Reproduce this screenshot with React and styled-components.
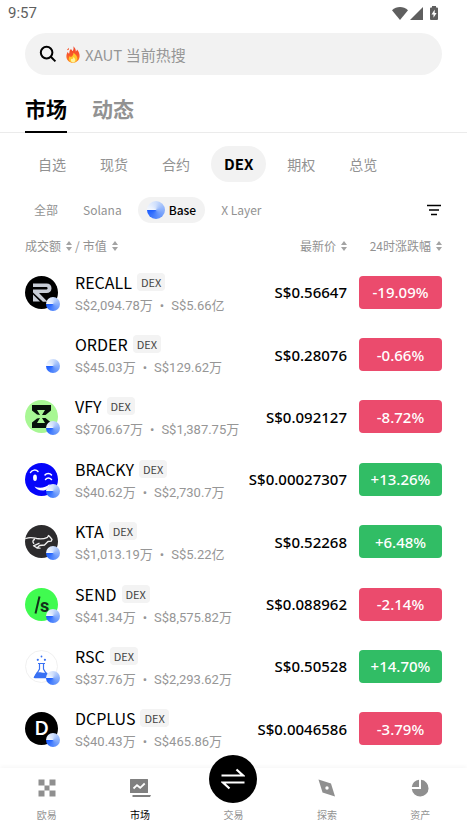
import React from "react";
import styled, { createGlobalStyle, css } from "styled-components";

const GlobalStyle = createGlobalStyle`
  *, *::before, *::after { box-sizing: border-box; }
  html, body { margin: 0; background: #fff; }
  body, button, input {
    font-family: "Noto Sans CJK SC", Roboto, sans-serif;
  }
  button { margin: 0; padding: 0; border: 0; background: none; color: inherit; cursor: pointer; }
  svg { display: block; flex: none; }
`;

const Screen = styled.div`
  display: flex;
  flex-direction: column;
  min-height: 100vh;
  color: #000;
`;

const StatusBar = styled.div`
  display: flex;
  align-items: center;
  justify-content: space-between;
  height: 26px;
  padding: 0 24px 0 8px;
  font-family: Roboto, sans-serif;
  font-size: 15px;
  color: #5f5f5f;
`;

const StatusIcons = styled.div`
  display: flex;
  align-items: center;
  gap: 2px;
`;

const SearchBar = styled.label`
  display: flex;
  align-items: center;
  height: 42px;
  margin: 7px 25px 0;
  padding: 0 14px;
  border-radius: 21px;
  background: #f2f2f2;
`;

const SearchFire = styled.span`
  margin-left: 9px;
`;

const SearchInput = styled.input`
  flex: 1;
  min-width: 0;
  margin-left: 5px;
  padding: 0;
  border: 0;
  outline: 0;
  background: transparent;
  font-size: 15px;
  color: #000;
  &::placeholder { color: #969696; opacity: 1; }
`;

const MainTabs = styled.nav`
  display: flex;
  gap: 25px;
  height: 58px;
  padding: 0 25px;
  border-bottom: 1px solid #ebebeb;
`;

const MainTab = styled.button`
  margin-bottom: -1px;
  padding-bottom: 1px;
  padding-top: 10px;
  border-bottom: 2px solid ${(p) => (p.$active ? "#000" : "transparent")};
  font-size: 21px;
  line-height: 24px;
  font-weight: 700;
  color: ${(p) => (p.$active ? "#000" : "#929292")};
`;

const SubTabs = styled.nav`
  display: flex;
  gap: 8px;
  padding: 13px 25px 0;
`;

const SubTab = styled.button`
  height: 36px;
  padding: 0 13px;
  border-radius: 18px;
  font-size: 14px;
  line-height: 20px;
  color: #929292;
  ${(p) =>
    p.$active &&
    css`
      background: #f2f2f2;
      color: #000;
      font-size: 15px;
      font-weight: 700;
    `}
`;

const ChainBar = styled.div`
  display: flex;
  align-items: center;
  gap: 7px;
  padding: 15px 25px 0;
`;

const ChainChip = styled.button`
  display: flex;
  align-items: center;
  gap: 4px;
  height: 26px;
  padding: 0 9px;
  border-radius: 13px;
  font-size: 12px;
  line-height: 16px;
  color: #929292;
  ${(p) =>
    p.$active &&
    css`
      background: #f2f2f2;
      color: #000;
      font-weight: 500;
    `}
`;

const FilterButton = styled.button`
  margin-left: auto;
`;

const BaseMark = styled.span`
  display: block;
  flex: none;
  width: ${(p) => p.$size}px;
  height: ${(p) => p.$size}px;
  border-radius: 50%;
  background: conic-gradient(from 270deg, #f4f8ff, #cfdffc 25%, #96b8fb 45%, #5388fc 75%, #1a5cff);
`;

const MarketTable = styled.table`
  display: flex;
  flex: 1;
  flex-direction: column;
  padding: 0 25px 8px;
`;

const TableHead = styled.thead`
  display: block;
`;

const TableBody = styled.tbody`
  display: flex;
  flex: 1;
  flex-direction: column;
`;

const rowGrid = css`
  display: grid;
  grid-template-columns: minmax(0, 1fr) auto 83px;
  column-gap: 12px;
  align-items: center;
`;

const HeadRow = styled.tr`
  ${rowGrid}
  height: 38px;
  padding-top: 8px;
`;

const HeadCell = styled.th`
  display: flex;
  align-items: center;
  justify-content: ${(p) => (p.$end ? "flex-end" : "flex-start")};
  gap: 3px;
  padding: 0;
  font-size: 12px;
  line-height: 16px;
  font-weight: 400;
  color: #929292;
`;

const SortButton = styled.button`
  display: flex;
  align-items: center;
  gap: 5px;
  font-size: 12px;
  line-height: 16px;
  white-space: nowrap;
`;

const Row = styled.tr`
  ${rowGrid}
  flex: 1;
  min-height: 60px;
`;

const AssetCell = styled.td`
  display: flex;
  align-items: center;
  gap: 17px;
  padding: 0;
`;

const Avatar = styled.div`
  position: relative;
  flex: none;
  width: 33px;
  height: 33px;
`;

const ChainBadge = styled.div`
  position: absolute;
  right: -2px;
  bottom: -2px;
`;

const AssetText = styled.div`
  display: flex;
  flex-direction: column;
  gap: 6px;
  padding-top: 3px;
`;

const AssetName = styled.div`
  display: flex;
  align-items: center;
  gap: 5px;
  font-size: 16px;
  line-height: 18px;
`;

const Tag = styled.span`
  padding: 0 4px;
  border-radius: 4px;
  background: #f3f3f3;
  font-size: 11px;
  line-height: 18px;
  color: #444;
`;

const AssetMeta = styled.div`
  display: flex;
  gap: 7px;
  font-family: Roboto, "Noto Sans CJK SC", sans-serif;
  font-size: 13px;
  line-height: 18px;
  white-space: nowrap;
  color: #969696;
`;

const PriceCell = styled.td`
  padding: 0;
  font-family: "Noto Sans", sans-serif;
  font-size: 15px;
  font-weight: 500;
  line-height: 20px;
  text-align: right;
`;

const ChangeCell = styled.td`
  padding: 0;
`;

const ChangeButton = styled.button`
  width: 100%;
  height: 33px;
  border-radius: 4px;
  background: ${(p) => (p.$up ? "#31bd65" : "#eb4b6d")};
  color: #fff;
  font-family: "Noto Sans", sans-serif;
  font-size: 15px;
  font-weight: 500;
  line-height: 20px;
`;

const BottomNav = styled.nav`
  position: sticky;
  bottom: 0;
  display: grid;
  grid-template-columns: repeat(5, 1fr);
  height: 62px;
  background: #fff;
  box-shadow: 0 -2px 4px rgba(0, 0, 0, 0.03);
`;

const NavItem = styled.a`
  display: flex;
  flex-direction: column;
  align-items: center;
  justify-content: flex-end;
  gap: 8px;
  padding-bottom: 7px;
  font-size: 10px;
  line-height: 16px;
  text-decoration: none;
  color: ${(p) => (p.$active ? "#000" : "#929292")};
`;

const NavIcon = styled.span`
  display: flex;
  align-items: center;
  justify-content: center;
  height: 22px;
`;

const TradeCircle = styled.span`
  display: flex;
  align-items: center;
  justify-content: center;
  width: 48px;
  height: 48px;
  margin: -20px 0 -4px;
  border-radius: 50%;
  background: #000;
`;

const SortIcon = () => (
  <svg width="6" height="10" viewBox="0 0 6 10" fill="#a3a3a3" aria-hidden="true">
    <path d="M3 0 6 4H0zM3 10 0 6h6z" />
  </svg>
);

const SearchIcon = () => (
  <svg width="18" height="18" viewBox="0 0 18 18" fill="none" stroke="#000" strokeWidth="2" aria-hidden="true">
    <circle cx="7.6" cy="7.6" r="5.8" />
    <path d="m11.8 11.8 4.6 4.6" />
  </svg>
);

const FireIcon = () => (
  <svg width="14" height="17" viewBox="0 0 14 17" aria-hidden="true">
    <defs>
      <linearGradient id="fire" x1="0" y1="0" x2="0" y2="1">
        <stop offset="0" stopColor="#f0462c" />
        <stop offset="0.5" stopColor="#f9552a" />
        <stop offset="1" stopColor="#ff8b1f" />
      </linearGradient>
    </defs>
    <path
      d="M7.2.3c2 1.500 2.700 3.100 2.600 5.200.7-.3 1.100-1 1.200-1.900 1.800 2 2.700 4.200 2.600 6.700-.1 3.700-2.700 6.400-6.500 6.400S.400 14.100.400 10.400c0-1.900.700-3.400 1.400-4.600.2 1 .6 1.600 1.200 2C3.700 6.600 3.200 5.500 4 4c.5-.9 1.300-1.100 1.700-.2.4.9.600 1.200 1 1.300C7.600 3.700 7.900 2 7.200.3z"
      fill="url(#fire)"
    />
    <path d="M1 3.400c.8-.2 1.400-.8 1.500-1.600.9.900.4 2-.3 2.300-.5.200-1-.1-1.200-.7z" fill="#f5572f" />
    <path d="M7.500 6.800c2.700 2 4 4 3.800 5.900-.2 2.300-1.900 3.800-4.200 3.800s-4.200-1.400-4.300-3.700c0-1.200.4-2.100 1-2.900.4.800.8 1.100 1.400 1.100C6.700 10.200 7.300 8.900 7.500 6.800z" fill="#ffc52c" />
    <path d="M7.300 11c1.500 1.100 2.100 2.200 2 3.300-.1 1.300-1 2.100-2.200 2.100s-2.200-.8-2.200-2.100c0-.6.200-1.100.5-1.500.9.600 1.900-.100 1.900-1.800z" fill="#fff19a" />
  </svg>
);

const WifiIcon = () => (
  <svg width="16" height="13" viewBox="0 0 16 13" fill="#5f5f5f" aria-hidden="true">
    <path d="M0 3.300C4.600-1.100 11.400-1.100 16 3.300L8 13z" />
  </svg>
);

const SignalIcon = () => (
  <svg width="13" height="13" viewBox="0 0 13 13" fill="#5f5f5f" aria-hidden="true">
    <path d="M13 0v13H0z" />
  </svg>
);

const BatteryIcon = () => (
  <svg width="18" height="14" viewBox="0 0 18 14" aria-hidden="true">
    <path d="M7 0h4v1.500h1q1 0 1 1V13q0 1-1 1H6q-1 0-1-1V2.500q0-1 1-1h1z" fill="#5f5f5f" />
    <path d="m9.700 3.500-3.200 5h2v3.300l3.100-4.900H9.700z" fill="#fff" />
  </svg>
);

const FilterIcon = () => (
  <svg width="16" height="12" viewBox="0 0 16 12" stroke="#000" strokeWidth="1.500" aria-hidden="true">
    <path d="M1 1.500h14M3 6h10M5 10.500h6" />
  </svg>
);

const LogoRecall = () => (
  <svg width="33" height="33" viewBox="0 0 33 33" aria-hidden="true">
    <circle cx="16.500" cy="16.500" r="16.500" />
    <path d="M8 7.500h13.500c3.200 0 5 1.700 5 4.700s-1.900 4.900-5 4.900H14l8.500 8.700h-4.600L8 16.500v-3h13c1 0 1.600-.5 1.600-1.300S22 11 21 11H8z" fill="#c7ccd5" />
    <path d="m8 18.500 7 7H8z" fill="#c7ccd5" />
  </svg>
);

const LogoVfy = () => (
  <svg width="33" height="33" viewBox="0 0 33 33" aria-hidden="true">
    <circle cx="16.500" cy="16.500" r="16.500" fill="#a8f794" />
    <path d="M7 5h19v5.500L20.500 15H17l3-5h-8l3 5-3-.5L7 10.500zM7 28h19v-5.500L20.500 18H17l3 5h-8l3-5-3 .5-5 4z" fill="#07110a" />
  </svg>
);

const LogoBracky = () => (
  <svg width="33" height="33" viewBox="0 0 33 33" aria-hidden="true">
    <circle cx="16.500" cy="16.500" r="16.500" fill="#0505fa" />
    <g fill="none" stroke="#fff" strokeWidth="1.500" strokeLinecap="round">
      <path d="M5.500 9.500c1.300-2.600 5.500-3.400 7.500-1M20 12c1.500-2.200 5-2 6.500 0M20.500 16.500c1.800-2.200 4-2 6 0" />
    </g>
    <ellipse cx="10" cy="14.800" rx="1.900" ry="3.300" fill="#fff" />
    <path d="M9.500 23.500c5.500 2.600 11 1.300 15-2.500 0 4-3 6.500-7 6.500-3.500 0-6.500-1.500-8-4z" fill="#fff" />
  </svg>
);

const LogoKta = () => (
  <svg width="33" height="33" viewBox="0 0 33 33" aria-hidden="true">
    <circle cx="16.500" cy="16.500" r="16.500" fill="#2c2b2d" />
    <path
      d="M.800 13.500c5-2 7.500-.8 11 0 3.500.7 7 .500 10.700-1.200l1-1.800 1.500 1.400 2 2.600-.8 1.700-3.200.3-3.500 3.500-5 .5-2.500 2.500 3 .2M14 18.300l-5.500 2.500 4 2.300M9.500 14.500c-1.800.5-2 2.500-.8 3.700"
      fill="none"
      stroke="#f1f1f1"
      strokeWidth="1.300"
      strokeLinecap="round"
      strokeLinejoin="round"
    />
  </svg>
);

const LogoSend = () => (
  <svg width="33" height="33" viewBox="0 0 33 33" aria-hidden="true">
    <circle cx="16.500" cy="16.500" r="16.500" fill="#40fb50" />
    <path d="m10.500 25.500 4-17" stroke="#12301a" strokeWidth="2" />
    <text x="15" y="23.500" fontFamily="Roboto, sans-serif" fontSize="18" fontWeight="700" fill="#12301a">s</text>
  </svg>
);

const LogoRsc = () => (
  <svg width="33" height="33" viewBox="0 0 33 33" aria-hidden="true">
    <circle cx="16.500" cy="16.500" r="16" fill="#fff" stroke="#f0f0f0" />
    <g fill="#3971f3">
      <circle cx="16.500" cy="6.500" r="0.900" />
      <circle cx="12.800" cy="9.800" r="1.100" />
      <circle cx="19.900" cy="9.800" r="1.100" />
      <path d="M11.500 22.500c3.500-1.200 6 1 10.500 0l2 4.200q.500 1.500-1 1.500H10q-1.500 0-1-1.500z" />
    </g>
    <path d="M13 13.500h7M14.500 13.500v5.500l-5 8.500h14l-5-8.500v-5.500" fill="none" stroke="#3971f3" strokeWidth="1.200" />
  </svg>
);

const LogoDcplus = () => (
  <svg width="33" height="33" viewBox="0 0 33 33" aria-hidden="true">
    <circle cx="16.500" cy="16.500" r="16.500" />
    <text x="16.500" y="23" textAnchor="middle" fontFamily="Lato, sans-serif" fontSize="18" fontWeight="700" fill="#fff">D</text>
  </svg>
);

const HomeIcon = () => (
  <svg width="18" height="18" viewBox="0 0 18 18" fill="#8f8f8f" aria-hidden="true">
    <path d="M.500.500H6.500v6H.500zM11.500.500h6v6h-6zM6.500 6.500h5v5h-5zM.500 11.500h6v6H.500zM11.500 11.500h6v6h-6z" />
  </svg>
);

const MarketIcon = () => (
  <svg width="22" height="20" viewBox="0 0 22 20" aria-hidden="true">
    <path d="M1.500 1h17q.5 0 .5.500v13q0 .5-.5.500h-17q-.5 0-.5-.500v-13q0-.5.500-.500zM3.500 17h18.500l-1 2H3.500z" fill="#808080" />
    <path d="m4.500 10.500 3.500-3.300 3.200 2.600 4.500-4.300" fill="none" stroke="#fff" strokeWidth="1.800" />
  </svg>
);

const TradeIcon = () => (
  <svg width="24" height="22" viewBox="0 0 24 22" fill="none" stroke="#fff" strokeWidth="2.200" aria-hidden="true">
    <path d="M.500 7.500H22L15.500 1.500M23.500 14.500H2l6.500 6" />
  </svg>
);

const ExploreIcon = () => (
  <svg width="18" height="18" viewBox="0 0 18 18" aria-hidden="true">
    <path d="m.500.500 12.500 4 4 13-12.500-4z" fill="#8f8f8f" />
    <circle cx="9" cy="9" r="1.700" fill="#fff" />
  </svg>
);

const AssetsIcon = () => (
  <svg width="18" height="18" viewBox="0 0 18 18" fill="#8f8f8f" aria-hidden="true">
    <path d="M8 .800V8H.800A8 8 0 0 1 8 .800z" />
    <path d="M10 .800A8.400 8.400 0 1 1 .800 10H10z" />
  </svg>
);

const assets = [
  { name: "RECALL", Logo: LogoRecall, volume: "S$2,094.78万", cap: "S$5.66亿", price: "S$0.56647", change: "-19.09%" },
  { name: "ORDER", volume: "S$45.03万", cap: "S$129.62万", price: "S$0.28076", change: "-0.66%" },
  { name: "VFY", Logo: LogoVfy, volume: "S$706.67万", cap: "S$1,387.75万", price: "S$0.092127", change: "-8.72%" },
  { name: "BRACKY", Logo: LogoBracky, volume: "S$40.62万", cap: "S$2,730.7万", price: "S$0.00027307", change: "+13.26%" },
  { name: "KTA", Logo: LogoKta, volume: "S$1,013.19万", cap: "S$5.22亿", price: "S$0.52268", change: "+6.48%" },
  { name: "SEND", Logo: LogoSend, volume: "S$41.34万", cap: "S$8,575.82万", price: "S$0.088962", change: "-2.14%" },
  { name: "RSC", Logo: LogoRsc, volume: "S$37.76万", cap: "S$2,293.62万", price: "S$0.50528", change: "+14.70%" },
  { name: "DCPLUS", Logo: LogoDcplus, volume: "S$40.43万", cap: "S$465.86万", price: "S$0.0046586", change: "-3.79%" },
];

const categories = ["自选", "现货", "合约", "DEX", "期权", "总览"];
const chains = ["全部", "Solana", "Base", "X Layer"];

const navItems = [
  { label: "欧易", Icon: HomeIcon },
  { label: "市场", Icon: MarketIcon, active: true },
  { label: "交易", Icon: TradeIcon, primary: true },
  { label: "探索", Icon: ExploreIcon },
  { label: "资产", Icon: AssetsIcon },
];

function AssetRow({ name, Logo, volume, cap, price, change }) {
  return (
    <Row>
      <AssetCell>
        <Avatar>
          {Logo && <Logo />}
          <ChainBadge>
            <BaseMark $size={14} />
          </ChainBadge>
        </Avatar>
        <AssetText>
          <AssetName>
            {name}
            <Tag>DEX</Tag>
          </AssetName>
          <AssetMeta>
            <span>{volume}</span>
            <span>•</span>
            <span>{cap}</span>
          </AssetMeta>
        </AssetText>
      </AssetCell>
      <PriceCell>{price}</PriceCell>
      <ChangeCell>
        <ChangeButton type="button" $up={change.startsWith("+")}>{change}</ChangeButton>
      </ChangeCell>
    </Row>
  );
}

export default function App() {
  return (
    <Screen>
      <GlobalStyle />
      <StatusBar>
        <span>9:57</span>
        <StatusIcons>
          <WifiIcon />
          <SignalIcon />
          <BatteryIcon />
        </StatusIcons>
      </StatusBar>
      <SearchBar>
        <SearchIcon />
        <SearchFire>
          <FireIcon />
        </SearchFire>
        <SearchInput type="text" aria-label="搜索" placeholder="XAUT 当前热搜" />
      </SearchBar>
      <MainTabs>
        <MainTab type="button" $active>市场</MainTab>
        <MainTab type="button">动态</MainTab>
      </MainTabs>
      <SubTabs>
        {categories.map((label) => (
          <SubTab key={label} type="button" $active={label === "DEX"}>{label}</SubTab>
        ))}
      </SubTabs>
      <ChainBar>
        {chains.map((label) => (
          <ChainChip key={label} type="button" $active={label === "Base"}>
            {label === "Base" && <BaseMark $size={18} />}
            {label}
          </ChainChip>
        ))}
        <FilterButton type="button" aria-label="筛选">
          <FilterIcon />
        </FilterButton>
      </ChainBar>
      <MarketTable>
        <TableHead>
          <HeadRow>
            <HeadCell scope="col">
              <SortButton type="button">成交额<SortIcon /></SortButton>
              /
              <SortButton type="button">市值<SortIcon /></SortButton>
            </HeadCell>
            <HeadCell scope="col" $end>
              <SortButton type="button">最新价<SortIcon /></SortButton>
            </HeadCell>
            <HeadCell scope="col" $end>
              <SortButton type="button">24时涨跌幅<SortIcon /></SortButton>
            </HeadCell>
          </HeadRow>
        </TableHead>
        <TableBody>
          {assets.map((asset) => (
            <AssetRow key={asset.name} {...asset} />
          ))}
        </TableBody>
      </MarketTable>
      <BottomNav>
        {navItems.map(({ label, Icon, active, primary }) => (
          <NavItem key={label} href="#" $active={active}>
            {primary ? (
              <TradeCircle>
                <Icon />
              </TradeCircle>
            ) : (
              <NavIcon>
                <Icon />
              </NavIcon>
            )}
            {label}
          </NavItem>
        ))}
      </BottomNav>
    </Screen>
  );
}
